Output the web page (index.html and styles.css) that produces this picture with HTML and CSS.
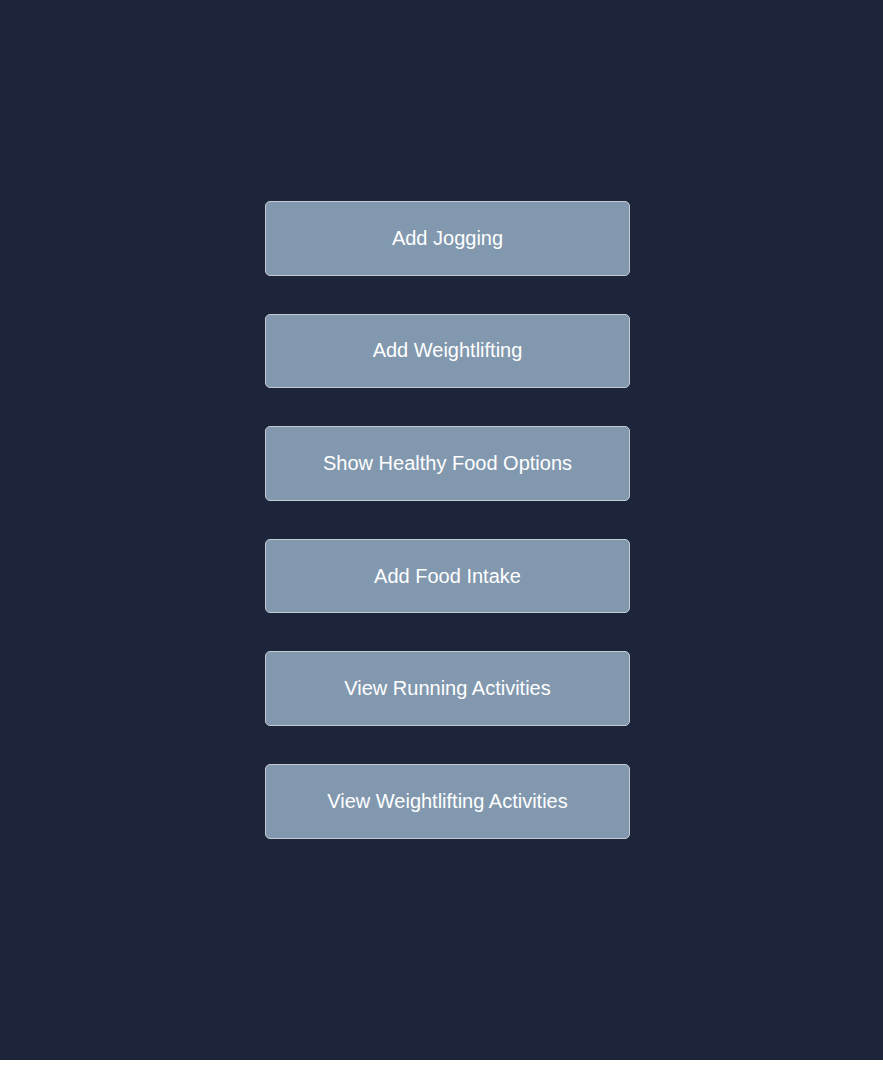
FILE: index.html
```html
<!DOCTYPE html>
<html>
<head>
<meta charset="utf-8">
<link rel="stylesheet" href="styles.css">
</head>
<body>
<main class="page">
  <div class="menu">
    <button class="btn">Add Jogging</button>
    <button class="btn">Add Weightlifting</button>
    <button class="btn">Show Healthy Food Options</button>
    <button class="btn">Add Food Intake</button>
    <button class="btn">View Running Activities</button>
    <button class="btn">View Weightlifting Activities</button>
  </div>
</main>
</body>
</html>
```

FILE: styles.css
```css
html, body {
  margin: 0;
  padding: 0;
  background: #ffffff;
}
.page {
  height: 1060px;
  background: #1c2539;
  display: flex;
  justify-content: center;
  padding-top: 201px;
  padding-left: 12px;
  box-sizing: border-box;
}
.menu {
  display: flex;
  flex-direction: column;
  gap: 38px;
  width: 365px;
}
.btn {
  height: 74.6px;
  box-sizing: border-box;
  background: #8298ae;
  border: 1px solid #c3cad2;
  border-radius: 5px;
  color: #ffffff;
  font-family: "Liberation Sans", Arial, sans-serif;
  font-size: 20px;
  padding: 0;
}
```
